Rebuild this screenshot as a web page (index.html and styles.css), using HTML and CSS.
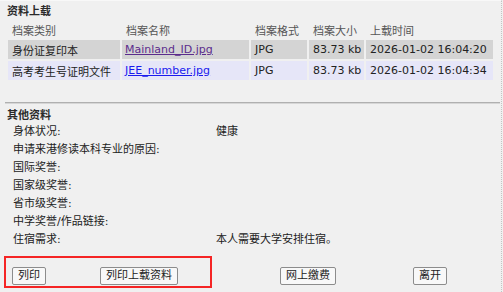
FILE: index.html
```html
<!DOCTYPE html>
<html lang="zh">
<head>
<meta charset="UTF-8" />
<title>资料上载</title>
<link rel="stylesheet" href="styles.css">
</head>
<body>

<div class="page">
    <div class="section-title">资料上载</div>
    <table class="files">
        <colgroup>
            <col class="col-type">
            <col class="col-name">
            <col class="col-format">
            <col class="col-size">
            <col class="col-time">
        </colgroup>
        <thead>
            <tr>
                <th>档案类别</th>
                <th>档案名称</th>
                <th>档案格式</th>
                <th>档案大小</th>
                <th>上载时间</th>
            </tr>
        </thead>
        <tbody>
            <tr class="row-a">
                <td>身份证复印本</td>
                <td><a class="file-link visited" href="#">Mainland_ID.jpg</a></td>
                <td>JPG</td>
                <td>83.73 kb</td>
                <td>2026-01-02 16:04:20</td>
            </tr>
            <tr class="row-b">
                <td>高考考生号证明文件</td>
                <td><a class="file-link" href="#">JEE_number.jpg</a></td>
                <td>JPG</td>
                <td>83.73 kb</td>
                <td>2026-01-02 16:04:34</td>
            </tr>
        </tbody>
    </table>

    <div class="divider"></div>

    <div class="section-title other">其他资料</div>
    <div class="info-list">
        <div class="info-row"><span class="info-label">身体状况:</span><span class="info-value">健康</span></div>
        <div class="info-row"><span class="info-label">申请来港修读本科专业的原因:</span><span class="info-value"></span></div>
        <div class="info-row"><span class="info-label">国际奖誉:</span><span class="info-value"></span></div>
        <div class="info-row"><span class="info-label">国家级奖誉:</span><span class="info-value"></span></div>
        <div class="info-row"><span class="info-label">省市级奖誉:</span><span class="info-value"></span></div>
        <div class="info-row"><span class="info-label">中学奖誉/作品链接:</span><span class="info-value"></span></div>
        <div class="info-row"><span class="info-label">住宿需求:</span><span class="info-value">本人需要大学安排住宿。</span></div>
    </div>

    <div class="actions">
        <div><button class="btn">列印</button></div>
        <div><button class="btn">列印上载资料</button></div>
        <div><button class="btn">网上缴费</button></div>
        <div><button class="btn">离开</button></div>
    </div>

    <div class="highlight"></div>
</div>

</body>
</html>
```

FILE: styles.css
```css
:root {
    --font-family: "DejaVu Sans", "Noto Sans CJK SC", sans-serif;
    --bg-color: #f0f0f0;
    --text-color: #222;
    --header-color: #555;
    --row-a: #d4d4d4;
    --row-b: #e6e6f8;
}

body {
    margin: 0;
    background: var(--bg-color);
    color: var(--text-color);
    font-family: var(--font-family);
    font-size: 11px;
}

.page {
    position: relative;
    width: 502px;
    height: 292px;
    box-sizing: border-box;
    padding-top: 2px;
    border-top: 1px solid #f8f8f8;
    border-right: 1px dotted #c4c4c4;
}

.section-title {
    padding-left: 7px;
    line-height: 17px;
    font-weight: bold;
    color: #2a2a2a;
}

.files {
    margin-left: 6px;
    border-spacing: 2px;
    table-layout: fixed;
    width: 489px;
}

.col-type { width: 112px; }
.col-name { width: 127px; }
.col-format { width: 56px; }
.col-size { width: 55px; }
.col-time { width: 127px; }

.files th {
    height: 16px;
    padding: 0 4px;
    font-weight: normal;
    text-align: left;
    color: var(--header-color);
    white-space: nowrap;
}

.files td {
    height: 19px;
    padding: 0 4px;
    white-space: nowrap;
}

.files td:nth-child(2) {
    padding-left: 3px;
}

.row-a td { background: var(--row-a); }
.row-b td { background: var(--row-b); }

.file-link {
    color: #1a1aee;
    text-decoration: underline;
}

.file-link.visited {
    color: #5b2c8c;
}

.divider {
    margin: 20px 1px 0 5px;
    border-top: 1px solid #b0b0b0;
    border-bottom: 1px solid #d6d6d6;
}

.section-title.other {
    margin-top: 4px;
    line-height: 15px;
}

.info-list {
    padding-left: 13px;
}

.info-row {
    display: flex;
    line-height: 18px;
    height: 18px;
}

.info-label {
    width: 203px;
    flex-shrink: 0;
}

.actions {
    display: grid;
    grid-template-columns: 88px 180px 133px auto;
    margin-top: 18px;
    padding-left: 12px;
}

.btn {
    height: 18px;
    padding: 0 5px;
    font-family: var(--font-family);
    font-size: 11px;
    color: #222;
    background: #f8f8f8;
    border: 1px solid #8c8c8c;
    border-radius: 2px;
    line-height: 16px;
}

.highlight {
    position: absolute;
    left: 4px;
    top: 255px;
    width: 208px;
    height: 32px;
    box-sizing: border-box;
    border: 2px solid #f52525;
}
```
